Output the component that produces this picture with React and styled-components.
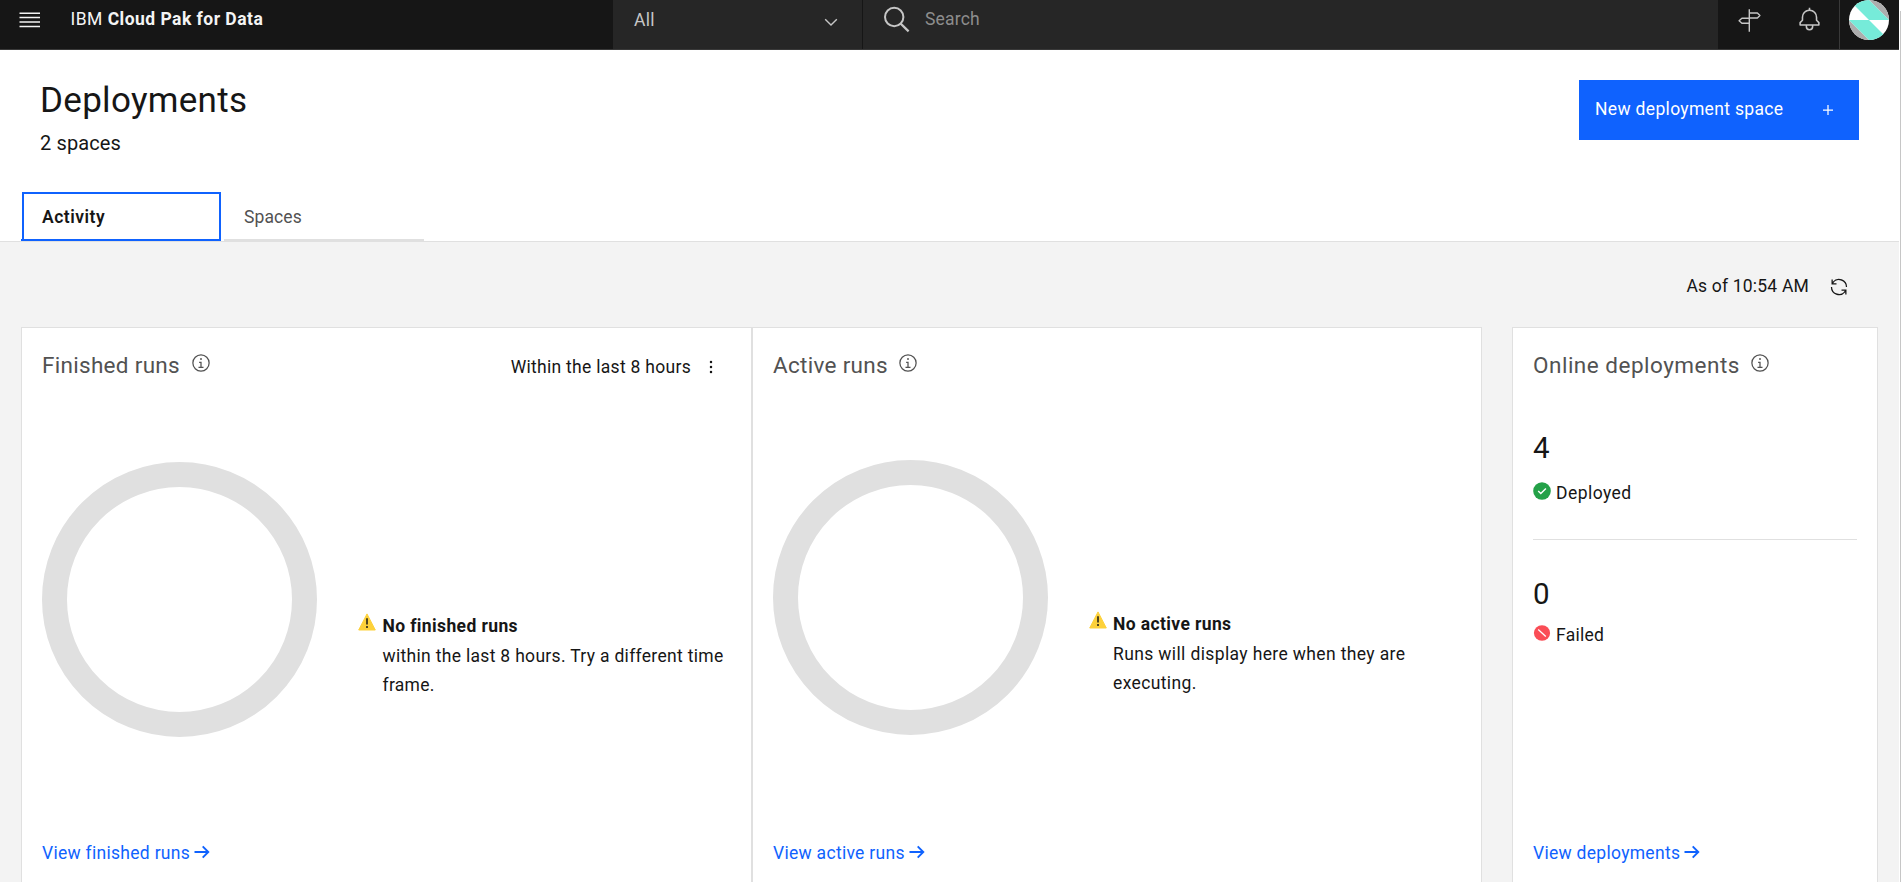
import React from 'react';
import styled, { createGlobalStyle } from 'styled-components';

const GlobalStyle = createGlobalStyle`
  * { box-sizing: border-box; }
  body { margin: 0; background: #fff; overflow: hidden; }
  body, button { font-family: Roboto, 'Liberation Sans', sans-serif; }
`;

const Page = styled.div`
  display: flex;
  width: 100%;
  height: 882px;
  overflow: hidden;
  color: #161616;
  font-size: 17.5px;
  letter-spacing: 0.29px;
`;

const Main = styled.div`
  flex: 1;
  min-width: 0;
  display: flex;
  flex-direction: column;
`;

const ScrollTrack = styled.div`
  width: 2px;
  padding: 11px 0 0 1px;
  background: #fff;

  &::before {
    content: '';
    display: block;
    height: 100%;
    background: #c6c6c6;
  }
`;

/* ---------- top bar ---------- */

const TopBar = styled.header`
  display: flex;
  flex: none;
  height: 50px;
  background: #161616;
  border-bottom: 1px solid #393939;
`;

const Brand = styled.div`
  display: flex;
  align-items: center;
  width: 613px;
  height: 38px;
  padding-left: 17px;
  color: #f4f4f4;
`;

const BrandName = styled.div`
  margin-left: 28.5px;
  letter-spacing: 0.47px;
  white-space: nowrap;

  b { font-weight: 700; }
`;

const ScopeSelect = styled.div`
  display: flex;
  justify-content: space-between;
  width: 250px;
  height: 49px;
  padding: 0 23px 0 21px;
  line-height: 40px;
  background: #262626;
  border-right: 1px solid #161616;
  color: #c6c6c6;

  svg { margin-top: 12px; }
`;

const SearchBox = styled.div`
  display: flex;
  flex: 1;
  gap: 14px;
  height: 49px;
  padding: 0 18px;
  line-height: 38px;
  background: #262626;
  color: #8d8d8d;
  letter-spacing: 0.2px;

  svg { margin-top: 5px; }
`;

const IconButton = styled.div`
  display: flex;
  justify-content: center;
  width: ${(p) => p.$width}px;
  height: 49px;
  padding-top: 7px;
`;

const AvatarCell = styled.div`
  width: 60px;
  height: 49px;
  padding-left: 9px;
  border-left: 1px solid #393939;
`;

/* ---------- page heading ---------- */

const Heading = styled.section`
  display: flex;
  flex: none;
  flex-direction: column;
  justify-content: space-between;
  height: 192px;
  padding-top: 30px;
  border-bottom: 1px solid #e0e0e0;
`;

const HeadingRow = styled.div`
  display: flex;
  justify-content: space-between;
  padding: 0 40px 0 39px;
`;

const Title = styled.h1`
  margin: 0 0 0 1px;
  font-size: 35px;
  font-weight: 400;
  line-height: 42px;
  letter-spacing: 0.3px;
`;

const Subtitle = styled.p`
  margin: 6px 0 0 1px;
  font-size: 20px;
  line-height: 30px;
  letter-spacing: 0.12px;
`;

const PrimaryButton = styled.button`
  display: flex;
  align-items: center;
  justify-content: space-between;
  width: 280px;
  height: 60px;
  padding: 0 21px 0 16px;
  border: 0;
  background: #0f62fe;
  color: #fff;
  font-size: 17.5px;
  line-height: 24px;
  letter-spacing: 0.33px;
`;

const ButtonLabel = styled.span`
  padding-bottom: 2px;
`;

const Tabs = styled.nav`
  display: flex;
  gap: 3px;
  padding-left: 21px;
`;

const Tab = styled.div`
  width: 200px;
  height: 49px;
  line-height: 50px;
  padding-left: 20px;
  color: #525252;
  letter-spacing: 0.1px;
  border-bottom: 2px solid #e0e0e0;

  ${(p) => p.$active && `
    border-bottom-color: #0f62fe;
    color: #161616;
    font-weight: 600;
    letter-spacing: 0.5px;
    padding-left: 1px;
  `}
`;

const TabFocus = styled.span`
  display: block;
  height: 49px;
  padding-left: 18px;
  line-height: 46px;
  border: 2px solid #0f62fe;
`;

/* ---------- dashboard ---------- */

const Dashboard = styled.section`
  flex: 1;
  min-height: 0;
  overflow: hidden;
  background: #f3f3f3;
`;

const StatusLine = styled.div`
  display: flex;
  align-items: center;
  justify-content: flex-end;
  gap: 20px;
  height: 85px;
  padding: 3px 50px 0 0;
  letter-spacing: 0.2px;

  svg { margin-top: 2px; }
`;

const CardRow = styled.div`
  display: flex;
  padding-left: 21px;
`;

const Card = styled.article`
  display: flex;
  flex-direction: column;
  flex: none;
  width: ${(p) => p.$width}px;
  height: 580px;
  margin-left: ${(p) => p.$gap || 0}px;
  padding: 22px 20px 41px;
  background: #fff;
  border: 1px solid #e0e0e0;
`;

const CardHeader = styled.div`
  display: flex;
  justify-content: space-between;
  height: 30px;
`;

const CardTitle = styled.h2`
  display: flex;
  gap: ${(p) => p.$gap || 10}px;
  margin: 0;
  font-size: 22.5px;
  font-weight: 400;
  line-height: 30px;
  letter-spacing: ${(p) => p.$spacing || 0.3}px;
  color: #525252;

  svg { margin-top: 3px; }
`;

const TimeFrame = styled.div`
  display: flex;
  gap: 10px;
  line-height: 34px;
  padding-right: 10px;

  svg { margin-top: 7px; }
`;

const CardBody = styled.div`
  display: flex;
  margin-top: ${(p) => p.$offset}px;
`;

const Ring = styled.div`
  flex: none;
  width: 275px;
  height: 275px;
  border: 25px solid #e0e0e0;
  border-radius: 50%;
`;

const Notice = styled.div`
  display: flex;
  gap: ${(p) => p.$gap}px;
  padding: 150px 0 0 41px;

  svg { flex: none; margin-top: 1px; }
`;

const NoticeText = styled.p`
  width: 345px;
  margin: 0;
  line-height: 29.6px;
  letter-spacing: ${(p) => p.$spacing}px;

  strong { display: block; font-weight: 700; letter-spacing: 0.38px; }
`;

const CardLink = styled.a`
  display: flex;
  align-items: center;
  gap: 2px;
  margin-top: auto;
  line-height: 24px;
  color: #0f62fe;

  svg { margin-bottom: 2px; }
`;

const Stat = styled.div`
  padding-top: ${(p) => p.$top}px;
  padding-bottom: 34px;

  & + & { border-top: 1px solid #e0e0e0; }
`;

const StatValue = styled.div`
  font-size: 29.5px;
  line-height: 40px;
`;

const StatLabel = styled.div`
  display: flex;
  align-items: center;
  gap: 5px;
  margin-top: ${(p) => p.$top}px;
  line-height: 24px;
  letter-spacing: ${(p) => p.$spacing}px;

  svg { margin-bottom: 5px; }
`;

/* ---------- icons ---------- */

const MenuIcon = () => (
  <svg width="25" height="25" viewBox="0 0 25 25" stroke="#f4f4f4" strokeWidth="1.5">
    <path d="M2.5 6.2h20.5M2.5 10.6h20.5M2.5 15h20.5M2.5 19.4h20.5" />
  </svg>
);

const ChevronIcon = () => (
  <svg width="16" height="20" viewBox="0 0 16 20" fill="none" stroke="#c6c6c6" strokeWidth="1.4">
    <path d="M2.2 7.2 8 13l5.8-5.8" />
  </svg>
);

const SearchIcon = () => (
  <svg width="30" height="30" viewBox="0 0 30 30" fill="none" stroke="#c6c6c6" strokeWidth="2">
    <circle cx="13.2" cy="12" r="9.2" />
    <path d="m19.8 18.8 7.8 7.6" strokeWidth="2.3" />
  </svg>
);

const SignpostIcon = () => (
  <svg width="25" height="25" viewBox="0 0 25 25" fill="none" stroke="#c6c6c6" strokeWidth="1.4" strokeLinejoin="round">
    <path d="M13.3 2.3v22.4M13.3 6h8.1l2.5 2.500-2.500 2.500h-8.100M13.3 11.200H5.900L3.100 13.700l2.800 2.500h7.400" />
  </svg>
);

const BellIcon = () => (
  <svg width="25" height="25" viewBox="0 0 32 32" fill="#c6c6c6">
    <path d="M28.707 19.293 26 16.586V13a10.014 10.014 0 0 0-9-9.95V1h-2v2.05A10.014 10.014 0 0 0 6 13v3.586l-2.707 2.707A1 1 0 0 0 3 20v3a1 1 0 0 0 1 1h7v1a5 5 0 0 0 10 0v-1h7a1 1 0 0 0 1-1v-3a1 1 0 0 0-.293-.707ZM19 25a3 3 0 0 1-6 0v-1h6Zm8-3H5v-1.586l2.707-2.707A1 1 0 0 0 8 17v-4a8 8 0 0 1 16 0v4a1 1 0 0 0 .293.707L27 20.414Z" />
  </svg>
);

const AvatarIcon = () => (
  <svg width="40" height="40" viewBox="0 0 40 40">
    <clipPath id="avatarClip"><circle cx="20" cy="20" r="20" /></clipPath>
    <g clipPath="url(#avatarClip)">
      <rect width="40" height="40" fill="#fff" />
      <path d="M20 0h20v20zM0 20l20 20H0z" fill="#adadad" />
      <path d="M0 0h20l20 20H20zM0 20h20l20 20H20z" fill="#76ebd9" />
    </g>
  </svg>
);

const PlusIcon = () => (
  <svg width="20" height="20" viewBox="0 0 32 32" fill="#fff">
    <path d="M17 15V8h-2v7H8v2h7v7h2v-7h7v-2z" />
  </svg>
);

const RefreshIcon = () => (
  <svg width="20" height="20" viewBox="0 0 32 32" fill="#161616">
    <path d="M12 10H6.78A11 11 0 0 1 27 16h2A13 13 0 0 0 6 7.68V4H4v8h8zM20 22h5.22A11 11 0 0 1 5 16H3a13 13 0 0 0 23 8.32V28h2v-8h-8z" />
  </svg>
);

const InfoIcon = () => (
  <svg width="20" height="20" viewBox="0 0 32 32" fill="#525252">
    <path d="M17 22v-8h-4v2h2v6h-3v2h8v-2zM16 8a1.5 1.5 0 1 0 1.5 1.5A1.5 1.5 0 0 0 16 8Z" />
    <path d="M16 30a14 14 0 1 1 14-14 14 14 0 0 1-14 14Zm0-26a12 12 0 1 0 12 12A12 12 0 0 0 16 4Z" />
  </svg>
);

const KebabIcon = () => (
  <svg width="20" height="20" viewBox="0 0 32 32" fill="#161616">
    <circle cx="16" cy="8" r="2" />
    <circle cx="16" cy="16" r="2" />
    <circle cx="16" cy="24" r="2" />
  </svg>
);

const WarningIcon = () => (
  <svg width="18" height="18" viewBox="0 0 18 18">
    <path d="M9 .9 17.3 17H.7Z" fill="#fdd13a" stroke="#fdd13a" strokeWidth="1" strokeLinejoin="round" />
    <path d="M9 5.2v6.2" stroke="#161616" strokeWidth="1.5" />
    <circle cx="9" cy="14" r="1" fill="#161616" />
  </svg>
);

const ArrowIcon = () => (
  <svg width="20" height="20" viewBox="0 0 20 20" fill="none" stroke="#0f62fe" strokeWidth="1.9">
    <path d="M2.5 10h13.800M10.700 4.300l5.600 5.700-5.600 5.700" />
  </svg>
);

const SuccessIcon = () => (
  <svg width="18" height="18" viewBox="0 0 18 18">
    <circle cx="9" cy="9" r="8.8" fill="#24a148" />
    <path d="m5.2 9 2.6 2.5L12.9 6.5" fill="none" stroke="#fff" strokeWidth="1.4" />
  </svg>
);

const FailedIcon = () => (
  <svg width="18" height="18" viewBox="0 0 18 18">
    <ellipse cx="9" cy="9" rx="8.1" ry="7.7" fill="#fa4d56" />
    <path d="m5.2 5.6 7.6 6.8" stroke="#fff" strokeWidth="1.3" />
  </svg>
);

export default function App() {
  return (
    <Page>
      <GlobalStyle />
      <Main>
        <TopBar>
          <Brand>
            <MenuIcon />
            <BrandName>IBM <b>Cloud Pak for Data</b></BrandName>
          </Brand>
          <ScopeSelect>All<ChevronIcon /></ScopeSelect>
          <SearchBox><SearchIcon />Search</SearchBox>
          <IconButton $width={61}><SignpostIcon /></IconButton>
          <IconButton $width={60}><BellIcon /></IconButton>
          <AvatarCell><AvatarIcon /></AvatarCell>
        </TopBar>

        <Heading>
          <HeadingRow>
            <div>
              <Title>Deployments</Title>
              <Subtitle>2 spaces</Subtitle>
            </div>
            <PrimaryButton><ButtonLabel>New deployment space</ButtonLabel><PlusIcon /></PrimaryButton>
          </HeadingRow>
          <Tabs>
            <Tab $active><TabFocus>Activity</TabFocus></Tab>
            <Tab>Spaces</Tab>
          </Tabs>
        </Heading>

        <Dashboard>
          <StatusLine>As of 10:54 AM<RefreshIcon /></StatusLine>
          <CardRow>
            <Card $width={731}>
              <CardHeader>
                <CardTitle $gap={11}>Finished runs<InfoIcon /></CardTitle>
                <TimeFrame>Within the last 8 hours<KebabIcon /></TimeFrame>
              </CardHeader>
              <CardBody $offset={82}>
                <Ring />
                <Notice $gap={6.5}>
                  <WarningIcon />
                  <NoticeText $spacing={0.31}>
                    <strong>No finished runs</strong>
                    within the last 8 hours. Try a different time frame.
                  </NoticeText>
                </Notice>
              </CardBody>
              <CardLink>View finished runs<ArrowIcon /></CardLink>
            </Card>

            <Card $width={730}>
              <CardHeader>
                <CardTitle>Active runs<InfoIcon /></CardTitle>
              </CardHeader>
              <CardBody $offset={80}>
                <Ring />
                <Notice $gap={6}>
                  <WarningIcon />
                  <NoticeText $spacing={0.37}>
                    <strong>No active runs</strong>
                    Runs will display here when they are executing.
                  </NoticeText>
                </Notice>
              </CardBody>
              <CardLink>View active runs<ArrowIcon /></CardLink>
            </Card>

            <Card $width={366} $gap={30}>
              <CardHeader>
                <CardTitle $spacing={0.5}>Online deployments<InfoIcon /></CardTitle>
              </CardHeader>
              <Stat $top={48}>
                <StatValue>4</StatValue>
                <StatLabel $top={13} $spacing={0.45}><SuccessIcon />Deployed</StatLabel>
              </Stat>
              <Stat $top={34}>
                <StatValue>0</StatValue>
                <StatLabel $top={9} $spacing={0.25}><FailedIcon />Failed</StatLabel>
              </Stat>
              <CardLink>View deployments<ArrowIcon /></CardLink>
            </Card>
          </CardRow>
        </Dashboard>
      </Main>
      <ScrollTrack />
    </Page>
  );
}
